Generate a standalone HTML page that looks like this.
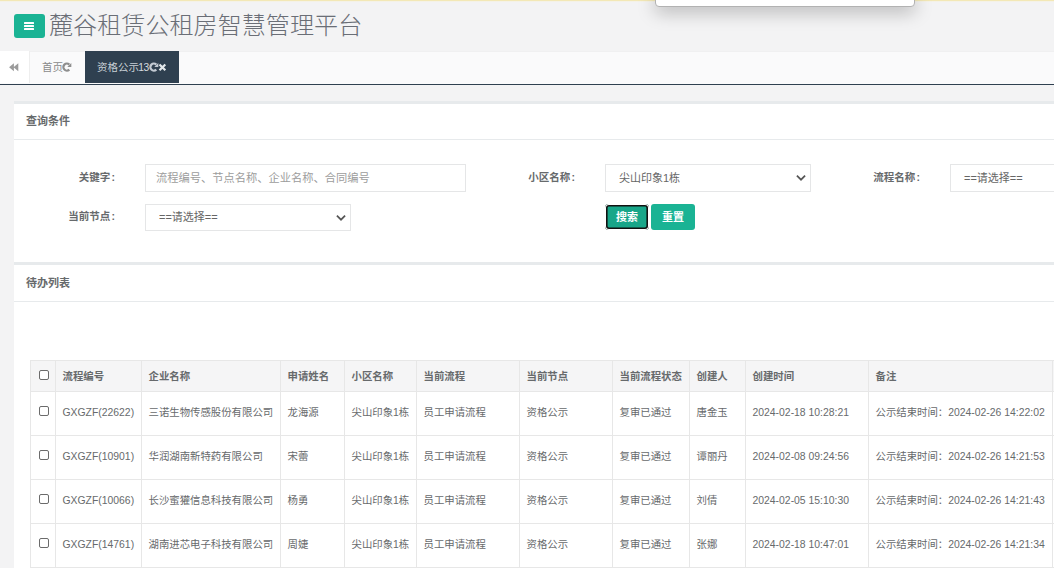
<!DOCTYPE html>
<html lang="zh-CN">
<head>
<meta charset="utf-8">
<title>麓谷租赁公租房智慧管理平台</title>
<style>
*{box-sizing:border-box;margin:0;padding:0}
html,body{width:1054px;height:568px;overflow:hidden;background:#f3f3f4;}
body{position:relative;font-family:"Liberation Sans","Noto Sans CJK SC",sans-serif;font-size:11px;color:#676a6c;}
.abs{position:absolute}
#topline{left:0;top:0;width:1054px;height:2px;background:linear-gradient(#f3e8b6,#f3e8b6 1px,#f5f1e0 1px,#f4f3ee 2px)}
#popup{left:655px;top:-7px;width:260px;height:14px;background:#fff;border:1px solid #b2b2b2;border-radius:0 0 4px 4px;box-shadow:0 5px 18px rgba(0,0,0,.27)}
#menu{left:14px;top:14px;width:31px;height:24px;background:#1ab394;border-radius:3px}
#menu i{position:absolute;left:10px;width:10px;height:2px;background:#fff;border-radius:.5px}
#title{left:49px;top:8.5px;font-size:24.1px;line-height:34px;color:#6a6e76;white-space:nowrap;font-weight:300}
#tabbar{left:0;top:51px;width:1054px;height:34px;background:#fafafb;border-bottom:1px solid #2f4050;border-top:1px solid #f0f0f1}
#back{left:0;top:51px;width:30px;height:32px;background:#fff;border-right:1px solid #eee}
.tab{top:51px;height:32px;line-height:32px;font-size:10.5px;white-space:nowrap}
#tab1{left:30px;width:55px;color:#8a8a8a;padding-left:12px}
#tab2{left:85px;width:94px;background:#2f4050;color:#c9d0d6;padding-left:12px}
.panel{left:14px;width:1060px;background:#fff;border-top:3px solid #e7eaec}
.ptitle{height:36px;border-bottom:1px solid #e7eaec;font-weight:bold;font-size:11px;line-height:34px;padding-left:12px;color:#676a6c}
.lbl i{font-style:normal;margin-left:1.2px}
.lbl{font-weight:bold;font-size:10.5px;margin-top:-0.5px;line-height:14px;text-align:right;white-space:nowrap;color:#676a6c}
.inp{background:#fff;border:1px solid #e5e6e7;height:27px;line-height:25px;font-size:11px;white-space:nowrap;border-radius:0}
.sel{color:#666;padding-left:13px;font-size:11px}
.btn{border:0;padding:0;margin:0;font-family:inherit;display:block;height:26px;line-height:25px;color:#fff;background:#1ab394;text-align:center;font-size:11px;font-weight:700;border-radius:3px}
table{border-collapse:collapse;table-layout:fixed;position:absolute;left:30px;top:360px;width:1122px;font-size:10.4px;color:#676a6c}
td,th{border:1px solid #e7e7e7;padding:0 0 0 6.5px;text-align:left;white-space:nowrap;overflow:hidden}
th{height:31px;background:#f5f5f6;font-weight:bold}
td{height:44px;padding-bottom:5px}
td.l{padding-bottom:2px}
td u{text-decoration:none;position:relative;top:0}
th{padding-bottom:1px}
.cb{-webkit-appearance:none;appearance:none;display:block;margin:0;width:10px;height:10px;border:1px solid #6b6b6b;border-radius:2px;background:#fff;margin-left:1.5px;position:relative;top:0.2px}
th .cb{top:-0.5px}
</style>
</head>
<body>
<div class="abs" id="topline"></div>
<div class="abs" id="popup"></div>
<div class="abs" id="menu"><i style="top:8px"></i><i style="top:11px"></i><i style="top:14px"></i></div>
<div class="abs" id="title">麓谷租赁公租房智慧管理平台</div>

<div class="abs" id="tabbar"></div>
<div class="abs" id="back"><svg width="30" height="32" viewBox="0 0 30 32"><path d="M13.9 12.2v8l-4.8-4zM18.3 12.2v8l-4.8-4z" fill="#9b9b9b"/></svg></div>
<div class="abs tab" id="tab1">首页<svg class="abs" style="left:32px;top:11px" width="11" height="11" viewBox="0 0 11 11"><path d="M7.3 7.6A3.5 3.5 0 1 1 7.3 2.6" fill="none" stroke="#8e8e8e" stroke-width="2.2"/><path d="M9.3 0.9V4.9H5.3z" fill="#8e8e8e"/></svg></div>
<div class="abs tab" id="tab2">资格公示<span style="font-size:10.3px;margin-left:-0.8px;letter-spacing:-0.5px;color:#d3d9df">13</span><svg class="abs" style="left:64px;top:11px" width="11" height="11" viewBox="0 0 11 11"><path d="M7.3 7.6A3.5 3.5 0 1 1 7.3 2.6" fill="none" stroke="#c3cad3" stroke-width="2.2"/><path d="M9.3 0.9V4.9H5.3z" fill="#c3cad3"/></svg><svg class="abs" style="left:73px;top:12.2px" width="9" height="9" viewBox="0 0 9 9"><path d="M1.5 1.5l5.8 5.8M7.3 1.5l-5.8 5.8" stroke="#e4e9ec" stroke-width="2.2" fill="none"/></svg></div>

<div class="abs panel" style="top:101px;height:161px">
  <div class="ptitle">查询条件</div>
</div>
<label class="abs lbl" style="left:40px;top:170px;width:75px">关键字<i>:</i></label>
<div class="abs inp" style="left:145px;top:164px;width:321px;padding-left:10px;color:#9c9c9c;font-size:11.25px;height:28px;line-height:27px">流程编号、节点名称、企业名称、合同编号</div>
<label class="abs lbl" style="left:40px;top:209px;width:75px">当前节点<i>:</i></label>
<div class="abs inp sel" style="left:145px;top:204px;width:206px">==请选择==<svg class="abs" style="right:3px;top:7.5px" width="12" height="10" viewBox="0 0 12 10"><path d="M1.9 2.6l4.1 4.1 4.1-4.1" fill="none" stroke="#555" stroke-width="1.7"/></svg></div>
<label class="abs lbl" style="left:500px;top:170px;width:75px">小区名称<i>:</i></label>
<div class="abs inp sel" style="left:605px;top:164px;width:206px;height:28px;line-height:27.5px">尖山印象1栋<svg class="abs" style="right:3px;top:7.5px" width="12" height="10" viewBox="0 0 12 10"><path d="M1.9 2.6l4.1 4.1 4.1-4.1" fill="none" stroke="#555" stroke-width="1.7"/></svg></div>
<label class="abs lbl" style="left:845px;top:170px;width:75px">流程名称<i>:</i></label>
<div class="abs inp sel" style="left:950px;top:164px;width:206px;height:28px;line-height:27.5px">==请选择==</div>
<button type="button" class="abs btn" style="left:605px;top:204px;width:44px;box-shadow:inset 0 0 0 1px #fff,inset 0 0 0 2.6px #111;background:#18a689;border-radius:4px">搜索</button>
<button type="button" class="abs btn" style="left:651px;top:204px;width:44px">重置</button>

<div class="abs panel" style="top:262px;height:320px">
  <div class="ptitle" style="height:37px;line-height:37.5px">待办列表</div>
</div>

<table>
<colgroup><col style="width:25px"><col style="width:86px"><col style="width:139px"><col style="width:64px"><col style="width:72px"><col style="width:103px"><col style="width:93px"><col style="width:77px"><col style="width:56px"><col style="width:123px"><col style="width:184px"><col style="width:100px"></colgroup>
<tr><th><input type="checkbox" class="cb"></th><th>流程编号</th><th>企业名称</th><th>申请姓名</th><th>小区名称</th><th>当前流程</th><th>当前节点</th><th>当前流程状态</th><th>创建人</th><th>创建时间</th><th>备注</th><th></th></tr>
<tr><td><input type="checkbox" class="cb"></td><td class="l">GXGZF(22622)</td><td>三诺生物传感股份有限公司</td><td>龙海源</td><td>尖山印象<u>1</u>栋</td><td>员工申请流程</td><td>资格公示</td><td>复审已通过</td><td>唐金玉</td><td class="l">2024-02-18 10:28:21</td><td>公示结束时间：<u>2024-02-26 14:22:02</u></td><td></td></tr>
<tr><td><input type="checkbox" class="cb"></td><td class="l">GXGZF(10901)</td><td>华润湖南新特药有限公司</td><td>宋蕾</td><td>尖山印象<u>1</u>栋</td><td>员工申请流程</td><td>资格公示</td><td>复审已通过</td><td>谭丽丹</td><td class="l">2024-02-08 09:24:56</td><td>公示结束时间：<u>2024-02-26 14:21:53</u></td><td></td></tr>
<tr><td><input type="checkbox" class="cb"></td><td class="l">GXGZF(10066)</td><td>长沙蜜獾信息科技有限公司</td><td>杨勇</td><td>尖山印象<u>1</u>栋</td><td>员工申请流程</td><td>资格公示</td><td>复审已通过</td><td>刘倩</td><td class="l">2024-02-05 15:10:30</td><td>公示结束时间：<u>2024-02-26 14:21:43</u></td><td></td></tr>
<tr><td><input type="checkbox" class="cb"></td><td class="l">GXGZF(14761)</td><td>湖南进芯电子科技有限公司</td><td>周婕</td><td>尖山印象<u>1</u>栋</td><td>员工申请流程</td><td>资格公示</td><td>复审已通过</td><td>张娜</td><td class="l">2024-02-18 10:47:01</td><td>公示结束时间：<u>2024-02-26 14:21:34</u></td><td></td></tr>
</table>
</body>
</html>
